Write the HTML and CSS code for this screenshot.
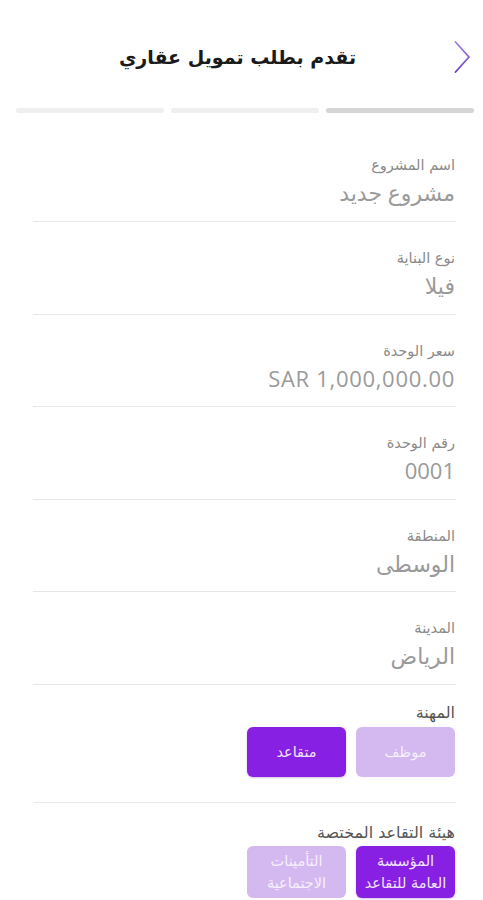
FILE: index.html
```html
<!DOCTYPE html>
<html lang="ar" dir="rtl">
<head>
<meta charset="utf-8">
<title>تقدم بطلب تمويل عقاري</title>
<link rel="stylesheet" href="styles.css">
</head>
<body>
<header class="topbar">
  <button class="back" aria-label="رجوع">
    <svg width="19" height="34" viewBox="0 0 19 34">
      <defs>
        <linearGradient id="chev" x1="0" y1="0" x2="0" y2="1">
          <stop offset="0" stop-color="#9f82da"/>
          <stop offset="1" stop-color="#6a3cc8"/>
        </linearGradient>
      </defs>
      <polyline points="2.5,2 16,17 2.5,32" fill="none" stroke="url(#chev)" stroke-width="1.8" stroke-linecap="round" stroke-linejoin="round"/>
    </svg>
  </button>
  <h1 class="title">تقدم بطلب تمويل عقاري</h1>
  <span class="spacer"></span>
</header>

<div class="progress">
  <span class="step active"></span>
  <span class="step"></span>
  <span class="step"></span>
</div>

<main class="form">
  <div class="field">
    <div class="label">اسم المشروع</div>
    <div class="value">مشروع جديد</div>
  </div>
  <div class="field">
    <div class="label">نوع البناية</div>
    <div class="value">فيلا</div>
  </div>
  <div class="field">
    <div class="label">سعر الوحدة</div>
    <div class="value num" dir="ltr">SAR 1,000,000.00</div>
  </div>
  <div class="field">
    <div class="label">رقم الوحدة</div>
    <div class="value">0001</div>
  </div>
  <div class="field">
    <div class="label">المنطقة</div>
    <div class="value">الوسطى</div>
  </div>
  <div class="field">
    <div class="label">المدينة</div>
    <div class="value">الرياض</div>
  </div>

  <section class="choice first">
    <div class="choice-label">المهنة</div>
    <div class="options">
      <button class="opt">موظف</button>
      <button class="opt selected">متقاعد</button>
    </div>
  </section>

  <section class="choice second">
    <div class="choice-label">هيئة التقاعد المختصة</div>
    <div class="options tall">
      <button class="opt selected">المؤسسة<br>العامة للتقاعد</button>
      <button class="opt">التأمينات<br>الاجتماعية</button>
    </div>
  </section>
</main>
</body>
</html>
```

FILE: styles.css
```css
* { box-sizing: border-box; }

html, body {
  margin: 0;
  padding: 0;
  background: #ffffff;
}

body {
  font-family: "Open Sans", "DejaVu Sans", sans-serif;
  color: #222;
  width: 483px;
  height: 900px;
  overflow: hidden;
}

.topbar {
  display: grid;
  grid-template-columns: 54px 1fr 54px;
  align-items: center;
  padding-top: 18px;
  height: 96px;
}

.back {
  border: 0;
  background: none;
  padding: 0 11px 0 0;
  margin: 0;
  display: flex;
  justify-content: flex-start;
  align-items: center;
  height: 34px;
}

.back svg { display: block; }

.title {
  margin: 0;
  text-align: center;
  font-family: "DejaVu Sans", sans-serif;
  font-size: 19px;
  font-weight: bold;
  color: #1a1a1a;
  line-height: 28px;
  padding-right: 8px;
}

.progress {
  display: flex;
  gap: 7px;
  padding: 0 9px 0 16px;
  margin-top: 12px;
}

.step {
  flex: 1;
  height: 5px;
  border-radius: 3px;
  background: #efefef;
}

.step.active { background: #d5d5d5; }

.form {
  padding: 0 27px 0 33px;
}

.field {
  height: 92.6px;
  border-bottom: 1px solid #e6e6e6;
  padding-top: 27px;
  padding-right: 1px;
}

.field:first-child {
  height: 109px;
  padding-top: 43px;
}

.label {
  font-family: "DejaVu Sans", sans-serif;
  font-size: 14.5px;
  line-height: 18px;
  color: #8a8a8a;
}

.value {
  margin-top: 4px;
  font-size: 22px;
  line-height: 28px;
  color: #9a9a9a;
  text-align: right;
}

.value.num {
  letter-spacing: 0.7px;
}

.choice {
  padding-top: 19px;
  padding-bottom: 25px;
}

.choice.first {
  border-bottom: 1px solid #e9e9e9;
}

.choice.second {
  padding-top: 21px;
  padding-bottom: 0;
}

.choice-label {
  font-family: "DejaVu Sans", sans-serif;
  font-size: 16px;
  line-height: 18px;
  color: #555;
  padding-right: 1px;
}

.options {
  display: flex;
  gap: 10px;
  margin-top: 5px;
  padding-right: 1px;
}

.options.tall { margin-top: 4px; }

.opt {
  width: 99px;
  height: 50px;
  border: 0;
  border-radius: 6px;
  background: #d3b9ef;
  color: #f6effd;
  font-family: "DejaVu Sans", sans-serif;
  font-size: 14.5px;
  line-height: 22px;
  padding: 0;
  text-align: center;
}

.options.tall .opt { height: 52px; }

.opt.selected {
  background: #8720e2;
  color: #f1e4ff;
  box-shadow: 0 1px 2px rgba(80, 0, 140, 0.25);
}
```
